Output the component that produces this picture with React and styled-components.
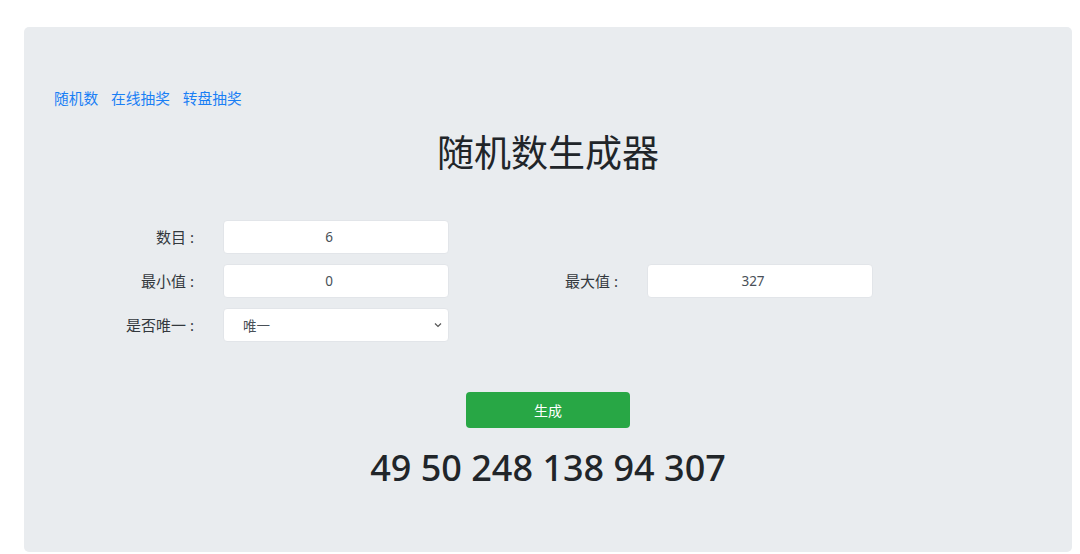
import React from "react";
import styled, { createGlobalStyle } from "styled-components";

const GlobalStyle = createGlobalStyle`
  html, body {
    margin: 0;
    padding: 0;
    background: #ffffff;
  }
  body {
    font-family: "Noto Sans", "Noto Sans CJK SC", sans-serif;
    color: #212529;
  }
  * { box-sizing: border-box; }
`;

const Page = styled.div`
  padding: 27px 8px 0 24px;
`;

const Panel = styled.div`
  background: #e9ecef;
  border-radius: 5px;
  padding: 60px 30px 64px 30px;
  height: 525px;
  display: flex;
  flex-direction: column;
`;

const Nav = styled.nav`
  display: flex;
  gap: 13px;
  height: 22px;
  align-items: center;
`;

const NavLink = styled.a`
  font-family: "Noto Sans CJK SC", sans-serif;
  font-size: 14.7px;
  line-height: 22px;
  color: #1a7ff5;
  text-decoration: none;
  cursor: pointer;
`;

const Title = styled.h1`
  margin: 20px 0 0;
  text-align: center;
  font-family: "Noto Sans CJK SC", sans-serif;
  font-weight: 400;
  font-size: 37px;
  line-height: 44px;
  color: #212529;
`;

const Form = styled.div`
  margin-top: 47px;
  display: grid;
  grid-template-columns: 145px 226px 150px 226px;
  column-gap: 24px;
  row-gap: 10px;
`;

const Label = styled.label`
  grid-column: ${(p) => p.$col};
  text-align: right;
  padding-right: 5px;
  font-family: "Noto Sans CJK SC", sans-serif;
  font-size: 15px;
  line-height: 34px;
  color: #33383d;
`;

const Colon = styled.span`
  margin-left: 4px;
  font-family: "Noto Sans", sans-serif;
`;

const Input = styled.input`
  grid-column: ${(p) => p.$col};
  height: 34px;
  width: 226px;
  border: 1px solid #e2e5e9;
  border-radius: 4px;
  background: #ffffff;
  padding: 0 26px 0 12px;
  text-align: center;
  font-family: "Noto Sans", sans-serif;
  font-size: 13.5px;
  color: #495057;
  outline: none;
`;

const SelectWrap = styled.div`
  grid-column: ${(p) => p.$col};
  position: relative;
  width: 226px;
  height: 34px;
`;

const Select = styled.select`
  appearance: none;
  -webkit-appearance: none;
  height: 34px;
  width: 226px;
  border: 1px solid #e2e5e9;
  border-radius: 4px;
  background: #ffffff;
  padding: 0 24px 0 19px;
  font-family: "Noto Sans CJK SC", sans-serif;
  font-size: 13.5px;
  color: #495057;
  outline: none;
`;

const Chevron = styled.svg`
  position: absolute;
  right: 7px;
  top: 14px;
  width: 8px;
  height: 6px;
  pointer-events: none;
`;

const ButtonRow = styled.div`
  margin-top: 50px;
  display: flex;
  justify-content: center;
`;

const GenerateButton = styled.button`
  width: 164px;
  height: 36px;
  border: none;
  border-radius: 4px;
  background: #28a745;
  color: #ffffff;
  font-family: "Noto Sans CJK SC", sans-serif;
  font-size: 14px;
  cursor: pointer;
`;

const Result = styled.div`
  margin-top: 18px;
  text-align: center;
  font-family: "Noto Sans", sans-serif;
  font-size: 36px;
  line-height: 44px;
  font-weight: 500;
  color: #212529;
`;

export default function App() {
  return (
    <>
      <GlobalStyle />
      <Page>
        <Panel>
          <Nav>
            <NavLink>随机数</NavLink>
            <NavLink>在线抽奖</NavLink>
            <NavLink>转盘抽奖</NavLink>
          </Nav>
          <Title>随机数生成器</Title>
          <Form>
            <Label $col="1">数目<Colon>:</Colon></Label>
            <Input $col="2" defaultValue="6" />
            <Label $col="1">最小值<Colon>:</Colon></Label>
            <Input $col="2" defaultValue="0" />
            <Label $col="3">最大值<Colon>:</Colon></Label>
            <Input $col="4" defaultValue="327" />
            <Label $col="1">是否唯一<Colon>:</Colon></Label>
            <SelectWrap $col="2">
              <Select defaultValue="唯一">
                <option>唯一</option>
                <option>不唯一</option>
              </Select>
              <Chevron viewBox="0 0 8 6">
                <path d="M1 1.5 L4 4.5 L7 1.5" fill="none" stroke="#555" strokeWidth="1.2" />
              </Chevron>
            </SelectWrap>
          </Form>
          <ButtonRow>
            <GenerateButton>生成</GenerateButton>
          </ButtonRow>
          <Result>49 50 248 138 94 307</Result>
        </Panel>
      </Page>
    </>
  );
}
